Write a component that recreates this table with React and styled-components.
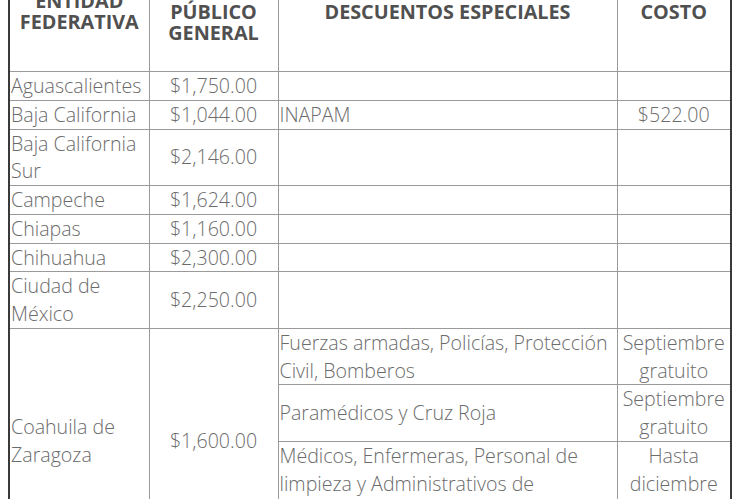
import React from "react"
import styled, { createGlobalStyle } from "styled-components"

const GlobalStyle = createGlobalStyle`
  body {
    margin: 0 0 0 8px;
    background: #fff;
    font-family: "Open Sans", "Liberation Sans", sans-serif;
    overflow: hidden;
  }
`

const Table = styled.table`
  width: 722px;
  margin-top: -50px;
  border-collapse: collapse;
  table-layout: fixed;
  border-left: 2px solid #3a3a3a;
  border-right: 2px solid #3a3a3a;
  font-size: 19.6px;
  line-height: 27.75px;
  font-weight: 300;
  color: #6b6b6b;
`

const Th = styled.th`
  height: 120px;
  padding: 0;
  border: 1px solid #9a9a9a;
  vertical-align: middle;
  text-align: center;
  font-size: 19.8px;
  line-height: 21px;
  font-weight: 700;
  color: #505050;
`

const Td = styled.td`
  padding: 0 1px;
  border: 1px solid #9a9a9a;
  vertical-align: middle;
  text-align: ${({ center }) => (center ? "center" : "left")};
`

const states = [
  { name: "Aguascalientes", price: "$1,750.00" },
  { name: "Baja California", price: "$1,044.00", discount: "INAPAM", cost: "$522.00" },
  { name: "Baja California Sur", price: "$2,146.00" },
  { name: "Campeche", price: "$1,624.00" },
  { name: "Chiapas", price: "$1,160.00" },
  { name: "Chihuahua", price: "$2,300.00" },
  { name: "Ciudad de México", price: "$2,250.00" },
]

const coahuila = {
  name: "Coahuila de Zaragoza",
  price: "$1,600.00",
  discounts: [
    { label: "Fuerzas armadas, Policías, Protección Civil, Bomberos", cost: "Septiembre gratuito" },
    { label: "Paramédicos y Cruz Roja", cost: "Septiembre gratuito" },
    {
      label: "Médicos, Enfermeras, Personal de limpieza y Administrativos de hospitales del sector salud y sus familiares",
      cost: "Hasta diciembre 50% de descuento",
    },
  ],
}

const App = () => {
  const [first, ...rest] = coahuila.discounts
  return (
    <>
      <GlobalStyle />
      <Table>
        <colgroup>
          <col style={{ width: 140 }} />
          <col style={{ width: 129 }} />
          <col style={{ width: 339 }} />
          <col style={{ width: 114 }} />
        </colgroup>
        <thead>
          <tr>
            <Th>ENTIDAD<br />FEDERATIVA</Th>
            <Th>COSTO<br />PÚBLICO<br />GENERAL</Th>
            <Th>DESCUENTOS ESPECIALES</Th>
            <Th>COSTO</Th>
          </tr>
        </thead>
        <tbody>
          {states.map(({ name, price, discount, cost }) => (
            <tr key={name}>
              <Td>{name}</Td>
              <Td center>{price}</Td>
              <Td>{discount}</Td>
              <Td center>{cost}</Td>
            </tr>
          ))}
          <tr>
            <Td rowSpan={coahuila.discounts.length}>{coahuila.name}</Td>
            <Td center rowSpan={coahuila.discounts.length}>{coahuila.price}</Td>
            <Td>{first.label}</Td>
            <Td center>{first.cost}</Td>
          </tr>
          {rest.map(({ label, cost }) => (
            <tr key={label}>
              <Td>{label}</Td>
              <Td center>{cost}</Td>
            </tr>
          ))}
        </tbody>
      </Table>
    </>
  )
}

export default App
